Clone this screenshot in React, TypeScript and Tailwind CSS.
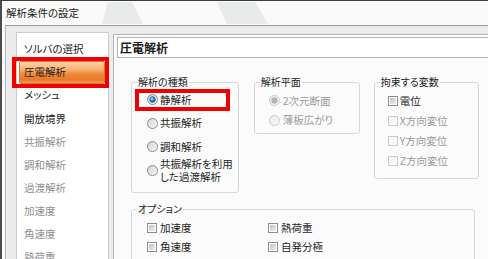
import React from "react";

function Radio({ checked = false, disabled = false }: { checked?: boolean; disabled?: boolean }) {
  return (
    <svg width="11" height="11" viewBox="0 0 11 11" className="block shrink-0">
      <defs>
        <linearGradient id="rfill" x1="0" y1="0" x2="1" y2="1">
          <stop offset="0" stopColor="#cfd2d2" />
          <stop offset="1" stopColor="#fbfbfb" />
        </linearGradient>
        <linearGradient id="rfillDis" x1="0" y1="0" x2="1" y2="1">
          <stop offset="0" stopColor="#e9eaea" />
          <stop offset="1" stopColor="#fbfbfb" />
        </linearGradient>
        <radialGradient id="rdot" cx="0.4" cy="0.35" r="0.75">
          <stop offset="0" stopColor="#b4e2ff" />
          <stop offset="0.45" stopColor="#3b8ad6" />
          <stop offset="1" stopColor="#173f7c" />
        </radialGradient>
      </defs>
      <circle
        cx="5.5"
        cy="5.5"
        r="5"
        fill={disabled ? "url(#rfillDis)" : "url(#rfill)"}
        stroke={disabled ? "#c8cbcb" : "#8b8e8e"}
        strokeWidth="1"
      />
      {checked && (
        <circle
          cx="5.5"
          cy="5.5"
          r="2.9"
          fill={disabled ? "#b3b6b6" : "url(#rdot)"}
          stroke={disabled ? "#a6a9a9" : "#1b4886"}
          strokeWidth="0.5"
        />
      )}
    </svg>
  );
}

function Check({ disabled = false }: { disabled?: boolean }) {
  if (disabled) {
    return <span className="block shrink-0 w-[10px] h-[10px] border border-[#c9cbcb] bg-[#f8f8f8]" />;
  }
  return (
    <span className="block shrink-0 w-[10px] h-[10px] border border-[#8c8e8e] bg-white p-px">
      <span className="block w-full h-full bg-gradient-to-br from-[#bfc1c1] to-[#efefef]" />
    </span>
  );
}

const listItems: { label: string; disabled?: boolean; selected?: boolean }[] = [
  { label: "ソルバの選択" },
  { label: "圧電解析", selected: true },
  { label: "メッシュ" },
  { label: "開放境界" },
  { label: "共振解析", disabled: true },
  { label: "調和解析", disabled: true },
  { label: "過渡解析", disabled: true },
  { label: "加速度", disabled: true },
  { label: "角速度", disabled: true },
  { label: "熱荷重", disabled: true },
];

export default function App() {
  return (
    <div className="relative w-[488px] h-[259px] overflow-hidden bg-[#f9faf9] border-t border-t-[#3d3d3d] border-l-2 border-l-[#4b4b4b] font-['Noto_Sans_CJK_JP','Noto_Sans',sans-serif] [font-feature-settings:'palt'] text-[#1e1e1e]">
      {/* Title bar */}
      <div className="relative h-[24px] flex items-center pl-[4px]">
        <svg className="absolute left-0 top-0" width="486" height="24" viewBox="0 0 486 24">
          <polygon points="106,1 130,1 141,23 100,23" fill="#e8ebe9" />
          <polygon points="215,1 253,1 266,23 225,23" fill="#e8ebe9" />
        </svg>
        <span className="relative text-[10.5px] leading-[14px] text-[#1a1a1a] whitespace-nowrap">解析条件の設定</span>
      </div>

      {/* Body */}
      <div className="ml-[3px] h-[240px] border-t border-l border-t-[#9a9a9a] border-l-[#b4b4b4] bg-[#ececec] flex items-start pl-[10px] pt-[6px]">
        {/* Left list panel */}
        <div className="w-[93px] h-[260px] shrink-0 bg-white border border-[#c8cfd1] pt-[4.7px] pl-[2px] pr-[3px]">
          {listItems.map((it) => (
            <div
              key={it.label}
              className={
                it.selected
                  ? "relative h-[23.1px] flex items-center pl-[4px] border border-[#d77728] rounded-[2px] bg-[linear-gradient(to_bottom,#fbd3ae_0%,#f7ab69_40%,#ef8b3b_55%,#e8792a_85%,#f19a56_100%)]"
                  : "h-[23.1px] flex items-center pl-[4px] border border-transparent"
              }
            >
              <span
                className={
                  it.disabled
                    ? "text-[10.5px] leading-[14px] text-[#8f8f8f] whitespace-nowrap"
                    : "text-[10.5px] leading-[14px] text-[#222222] whitespace-nowrap"
                }
              >
                {it.label}
              </span>
              {it.selected && (
                <div className="absolute -left-[8px] -right-[5px] -top-[4.5px] -bottom-[5.4px] border-4 border-[#f00000]" />
              )}
            </div>
          ))}
        </div>

        {/* Right panel */}
        <div className="ml-[4px] mt-[2px] w-[400px] h-[260px] shrink-0 bg-[#fafbfa] border-t border-l border-[#b3b6b6] pt-[2px] pl-[3px]">
          <div className="h-[21px] bg-white border border-[#b0b3b3] flex items-center pl-[2px]">
            <span className="text-[12px] font-bold leading-[15px] text-[#1a1a1a]">圧電解析</span>
          </div>

          <div className="ml-[14px] mt-[18px] flex items-start">
            {/* 解析の種類 */}
            <fieldset className="w-[106px] shrink-0 border border-[#d3d9db] rounded-[3px] px-[5px] pb-[10px]">
              <legend className="px-[1px] text-[10px] leading-[12px] text-[#1e1e1e]">解析の種類</legend>
              <div className="flex flex-col">
                <div className="relative h-[23.5px] flex items-center pl-[10px] gap-[2px]">
                  <Radio checked />
                  <span className="text-[10.5px] leading-[14px] whitespace-nowrap">静解析</span>
                  <div className="absolute left-[-2px] right-[3px] top-[1.3px] bottom-[0.5px] border-4 border-[#f00000]" />
                </div>
                <div className="h-[23.5px] flex items-center pl-[10px] gap-[2px]">
                  <Radio />
                  <span className="text-[10.5px] leading-[14px] whitespace-nowrap">共振解析</span>
                </div>
                <div className="h-[23.5px] flex items-center pl-[10px] gap-[2px]">
                  <Radio />
                  <span className="text-[10.5px] leading-[14px] whitespace-nowrap">調和解析</span>
                </div>
                <div className="h-[23.5px] flex items-center pl-[10px] gap-[2px]">
                  <Radio />
                  <span className="text-[10.5px] leading-[13.5px] whitespace-nowrap">
                    共振解析を利用
                    <br />
                    した過渡解析
                  </span>
                </div>
              </div>
            </fieldset>

            {/* 解析平面 */}
            <fieldset className="ml-[15px] w-[106px] shrink-0 border border-[#d3d9db] rounded-[3px] px-[5px] pt-[3px] pb-[3px]">
              <legend className="px-[1px] text-[10px] leading-[12px] text-[#1e1e1e]">解析平面</legend>
              <div className="flex flex-col">
                <div className="h-[19.5px] flex items-center pl-[9px] gap-[3px]">
                  <Radio checked disabled />
                  <span className="text-[10.5px] leading-[14px] text-[#9a9a9a] whitespace-nowrap">2次元断面</span>
                </div>
                <div className="h-[19.5px] flex items-center pl-[9px] gap-[3px]">
                  <Radio disabled />
                  <span className="text-[10.5px] leading-[14px] text-[#9a9a9a] whitespace-nowrap">薄板広がり</span>
                </div>
              </div>
            </fieldset>

            {/* 拘束する変数 */}
            <fieldset className="ml-[14px] w-[105px] shrink-0 border border-[#d3d9db] rounded-[3px] px-[5px] pt-[2.5px] pb-[7.5px]">
              <legend className="px-[1px] text-[10px] leading-[12px] text-[#1e1e1e]">拘束する変数</legend>
              <div className="flex flex-col">
                <div className="h-[20px] flex items-center pl-[8px] gap-[2px]">
                  <Check />
                  <span className="text-[10.5px] leading-[14px] whitespace-nowrap">電位</span>
                </div>
                <div className="h-[20px] flex items-center pl-[8px] gap-[2px]">
                  <Check disabled />
                  <span className="text-[10.5px] leading-[14px] text-[#9a9a9a] whitespace-nowrap">X方向変位</span>
                </div>
                <div className="h-[20px] flex items-center pl-[8px] gap-[2px]">
                  <Check disabled />
                  <span className="text-[10.5px] leading-[14px] text-[#9a9a9a] whitespace-nowrap">Y方向変位</span>
                </div>
                <div className="h-[20px] flex items-center pl-[8px] gap-[2px]">
                  <Check disabled />
                  <span className="text-[10.5px] leading-[14px] text-[#9a9a9a] whitespace-nowrap">Z方向変位</span>
                </div>
              </div>
            </fieldset>
          </div>

          {/* オプション */}
          <fieldset className="ml-[14px] mt-[10px] w-[344px] h-[90px] border border-[#d3d9db] rounded-[3px] px-[5px]">
            <legend className="px-[1px] text-[10px] leading-[12px] text-[#1e1e1e]">オプション</legend>
            <div className="pt-[3px] pl-[10px] grid grid-cols-[121px_1fr]">
              <div className="h-[19px] flex items-center gap-[3px]">
                <Check />
                <span className="text-[10.5px] leading-[14px] whitespace-nowrap">加速度</span>
              </div>
              <div className="h-[19px] flex items-center gap-[3px]">
                <Check />
                <span className="text-[10.5px] leading-[14px] whitespace-nowrap">熱荷重</span>
              </div>
              <div className="h-[19px] flex items-center gap-[3px]">
                <Check />
                <span className="text-[10.5px] leading-[14px] whitespace-nowrap">角速度</span>
              </div>
              <div className="h-[19px] flex items-center gap-[3px]">
                <Check />
                <span className="text-[10.5px] leading-[14px] whitespace-nowrap">自発分極</span>
              </div>
            </div>
          </fieldset>
        </div>
      </div>
    </div>
  );
}
